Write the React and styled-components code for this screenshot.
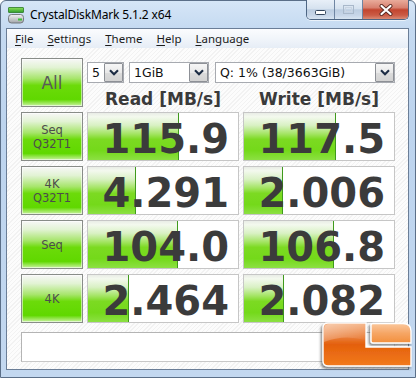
import React from "react";
import styled, { createGlobalStyle } from "styled-components";

const Global = createGlobalStyle`
  html, body { margin: 0; padding: 0; background: #ffffff; }
  body { width: 416px; height: 378px; overflow: hidden; }
`;

const Window = styled.div`
  position: relative;
  box-sizing: border-box;
  width: 416px;
  height: 378px;
  border: 1px solid #5b6f88;
  border-radius: 6px 6px 0 0;
  background: linear-gradient(to bottom, #d6e6f7 0px, #c5daf1 27px, #bdd4ee 120px, #c3d8f0 100%);
  display: flex;
  flex-direction: column;
  font-family: "DejaVu Sans", Verdana, sans-serif;
`;

const TitleBar = styled.div`
  height: 27px;
  flex: none;
  display: flex;
  align-items: center;
`;

const AppIcon = styled.svg`
  margin-left: 7px;
  flex: none;
`;

const Title = styled.span`
  margin-left: 5px;
  font-family: "Noto Sans", "Open Sans", sans-serif;
  font-size: 12px;
  letter-spacing: -0.15px;
  color: #000;
  line-height: 16px;
`;

const Controls = styled.div`
  margin-left: auto;
  margin-right: 6px;
  margin-top: -1px;
  align-self: flex-start;
  display: flex;
  height: 19px;
  border: 1px solid #4e6684;
  border-top: none;
  border-radius: 0 0 5px 5px;
  overflow: hidden;
  box-shadow: 0 1px 0 rgba(255, 255, 255, 0.6);
`;

const CtrlButton = styled.div`
  width: ${(p) => p.$w}px;
  height: 100%;
  display: flex;
  align-items: center;
  justify-content: center;
  box-sizing: border-box;
  border-left: ${(p) => (p.$first ? "none" : "1px solid #6f85a2")};
  background: ${(p) =>
    p.$close
      ? "linear-gradient(to bottom, #e9ab9b 0%, #d88170 40%, #c2452f 52%, #cb5b45 80%, #d98a74 100%)"
      : "linear-gradient(to bottom, #e8eff8 0%, #d6e2ef 45%, #bccde1 52%, #c7d6e8 80%, #d8e4f1 100%)"};
`;

const Client = styled.div`
  flex: 1;
  margin: 0 6px 7px 5px;
  border: 1px solid #6b7e97;
  display: flex;
  flex-direction: column;
  min-height: 0;
`;

const MenuBar = styled.div`
  height: 19px;
  flex: none;
  display: flex;
  align-items: center;
  gap: 14px;
  padding-left: 8px;
  background: linear-gradient(to bottom, #fbfcfe 0%, #f1f5fa 50%, #e6edf6 100%);
  font-family: "Noto Sans", "Open Sans", sans-serif;
  font-size: 11.5px;
  color: #1b1b1b;
`;

const MenuItem = styled.span`
  line-height: 16px;
  u { text-decoration: underline; text-underline-offset: 2px; }
`;

const Body = styled.div`
  flex: 1;
  padding: 10px 0 0 14px;
  background-color: #fbfbfb;
  background-image: repeating-linear-gradient(
    135deg,
    #fcfcfc 0px,
    #fcfcfc 2px,
    #f2f2f2 2px,
    #f2f2f2 3px
  );
`;

const Grid = styled.div`
  display: grid;
  grid-template-columns: 62px 152px 152px;
  grid-template-rows: repeat(5, 49px);
  column-gap: 4px;
  row-gap: 5px;
`;

const GreenButton = styled.div`
  box-sizing: border-box;
  border: 1px solid #888c88;
  box-shadow: inset 0 0 0 1px rgba(255, 255, 255, 0.55);
  background: linear-gradient(
    to bottom,
    #f7f7f7 0%,
    #e2f3d4 18%,
    #a6e56a 42%,
    #6cdb0a 56%,
    #60d800 86%,
    #9ee85c 94%,
    #c8f2a4 100%
  );
  display: flex;
  flex-direction: column;
  align-items: center;
  justify-content: center;
  color: ${(p) => (p.$big ? "#5a5a5a" : "#4c4c4c")};
  font-size: ${(p) => (p.$big ? "17px" : "11.5px")};
  line-height: ${(p) => (p.$big ? "20px" : "14px")};
`;

const TopRight = styled.div`
  grid-column: 2 / span 2;
  display: flex;
  flex-direction: column;
  padding-top: 4px;
`;

const SelectRow = styled.div`
  display: flex;
  height: 21px;
`;

const SelectBox = styled.div`
  box-sizing: border-box;
  width: ${(p) => p.$w}px;
  margin-left: ${(p) => p.$ml || 0}px;
  height: 21px;
  border: 1px solid #a7aab0;
  background: #ffffff;
  display: flex;
  align-items: stretch;
`;

const SelectText = styled.span`
  flex: 1;
  padding-left: 4px;
  font-size: 12.5px;
  line-height: 19px;
  color: #111;
  white-space: nowrap;
  overflow: hidden;
`;

const DropButton = styled.span`
  box-sizing: border-box;
  width: 19px;
  border: 1px solid #8d9096;
  border-radius: 1px;
  background: linear-gradient(to bottom, #f6f6f6 0%, #e9e9e9 50%, #dcdcdc 51%, #d2d2d2 100%);
  display: flex;
  align-items: center;
  justify-content: center;
`;

const HeaderRow = styled.div`
  display: grid;
  grid-template-columns: 152px 152px;
  column-gap: 4px;
  margin-top: 6px;
`;

const Header = styled.div`
  text-align: center;
  font-weight: bold;
  font-size: 17px;
  line-height: 20px;
  color: #3a3a3a;
`;

const Cell = styled.div`
  box-sizing: border-box;
  border: 1px solid #c6c6c6;
  background: #ffffff;
  display: grid;
  & > * { grid-area: 1 / 1; }
`;

const Bar = styled.div`
  justify-self: start;
  align-self: stretch;
  box-sizing: border-box;
  border-right: 1px solid #3f9a1c;
  background: linear-gradient(
    to bottom,
    #e9ece6 0%,
    #f3f9ee 8%,
    #d9f1c4 26%,
    #a5e566 44%,
    #7cda22 56%,
    #74d91a 80%,
    #8ce043 100%
  );
`;

const Value = styled.div`
  justify-self: end;
  align-self: center;
  padding: 5px 9px 0 0;
  font-weight: bold;
  font-size: 40px;
  line-height: 40px;
  color: #3b3b3b;
  position: relative;
`;

const Comment = styled.div`
  box-sizing: border-box;
  width: 374px;
  height: 30px;
  margin-top: 9px;
  border: 1px solid #b4b4b4;
  border-right-color: #d8d8d8;
  border-bottom-color: #c8c8c8;
  background: #ffffff;
`;

const Logo = styled.svg`
  position: absolute;
  left: 317px;
  top: 317px;
`;

const rows = [
  { label: ["Seq", "Q32T1"], read: "115.9", rw: 91, write: "117.5", ww: 92 },
  { label: ["4K", "Q32T1"], read: "4.291", rw: 48, write: "2.006", ww: 39 },
  { label: ["Seq"], read: "104.0", rw: 90, write: "106.8", ww: 90 },
  { label: ["4K"], read: "2.464", rw: 41, write: "2.082", ww: 40 },
];

const Chevron = () => (
  <svg width="10" height="7" viewBox="0 0 10 7">
    <polyline points="1,1.2 5,5.2 9,1.2" fill="none" stroke="#1c2c44" strokeWidth="2.1" />
  </svg>
);

const Select = ({ w, ml, children }) => (
  <SelectBox $w={w} $ml={ml}>
    <SelectText>{children}</SelectText>
    <DropButton>
      <Chevron />
    </DropButton>
  </SelectBox>
);

const Menu = ({ k, rest }) => (
  <MenuItem>
    <u>{k}</u>
    {rest}
  </MenuItem>
);

export default function App() {
  return (
    <>
      <Global />
      <Window>
        <TitleBar>
          <AppIcon width="17" height="18" viewBox="0 0 17 18">
            <defs>
              <linearGradient id="ig" x1="0" y1="0" x2="0" y2="1">
                <stop offset="0" stopColor="#8ee05a" />
                <stop offset="1" stopColor="#2f9c2c" />
              </linearGradient>
              <linearGradient id="dg" x1="0" y1="0" x2="0" y2="1">
                <stop offset="0" stopColor="#f2f2f2" />
                <stop offset="1" stopColor="#a2a6aa" />
              </linearGradient>
            </defs>
            <rect x="0.5" y="1.5" width="15" height="5" rx="0.5" fill="url(#ig)" stroke="#2a7a26" strokeWidth="0.8" />
            <rect x="0.5" y="8.5" width="15" height="8.5" rx="3" fill="url(#dg)" stroke="#6c7076" strokeWidth="0.9" />
            <rect x="10" y="12.5" width="4" height="2" fill="#3fc23a" />
          </AppIcon>
          <Title>CrystalDiskMark 5.1.2 x64</Title>
          <Controls>
            <CtrlButton $w={27} $first>
              <svg width="11" height="6" viewBox="0 0 11 6" style={{ marginTop: 6 }}>
                <rect x="0.5" y="0.5" width="10" height="4" rx="1" fill="#ffffff" stroke="#34465c" />
              </svg>
            </CtrlButton>
            <CtrlButton $w={28}>
              <svg width="11" height="9" viewBox="0 0 11 9">
                <rect x="0.5" y="0.5" width="10" height="8" fill="none" stroke="#a9b8ca" />
                <rect x="2.5" y="2.5" width="6" height="4" fill="none" stroke="#c9d4e2" />
              </svg>
            </CtrlButton>
            <CtrlButton $w={46} $close>
              <svg width="14" height="12" viewBox="0 0 14 12">
                <path d="M2.5 2 L11.5 10 M11.5 2 L2.5 10" stroke="#5a2a22" strokeWidth="4" strokeLinecap="round" />
                <path d="M2.5 2 L11.5 10 M11.5 2 L2.5 10" stroke="#ffffff" strokeWidth="2.2" strokeLinecap="round" />
              </svg>
            </CtrlButton>
          </Controls>
        </TitleBar>
        <Client>
          <MenuBar>
            <Menu k="F" rest="ile" />
            <Menu k="S" rest="ettings" />
            <Menu k="T" rest="heme" />
            <Menu k="H" rest="elp" />
            <Menu k="L" rest="anguage" />
          </MenuBar>
          <Body>
            <Grid>
              <GreenButton $big>All</GreenButton>
              <TopRight>
                <SelectRow>
                  <Select w={37}>5</Select>
                  <Select w={80} ml={5}>1GiB</Select>
                  <Select w={180} ml={6}>Q: 1% (38/3663GiB)</Select>
                </SelectRow>
                <HeaderRow>
                  <Header>Read [MB/s]</Header>
                  <Header>Write [MB/s]</Header>
                </HeaderRow>
              </TopRight>
              {rows.map((r) => (
                <React.Fragment key={r.label.join("-")}>
                  <GreenButton>
                    {r.label.map((l) => (
                      <span key={l}>{l}</span>
                    ))}
                  </GreenButton>
                  <Cell>
                    <Bar style={{ width: r.rw }} />
                    <Value>{r.read}</Value>
                  </Cell>
                  <Cell>
                    <Bar style={{ width: r.ww }} />
                    <Value>{r.write}</Value>
                  </Cell>
                </React.Fragment>
              ))}
            </Grid>
            <Comment />
          </Body>
        </Client>
        <Logo width="98" height="58" viewBox="0 0 98 58">
          <defs>
            <linearGradient id="lm" x1="0" y1="0" x2="0" y2="1">
              <stop offset="0" stopColor="#f2a46e" />
              <stop offset="0.35" stopColor="#e97a34" />
              <stop offset="0.5" stopColor="#e4600c" />
              <stop offset="1" stopColor="#f27a1c" />
            </linearGradient>
            <linearGradient id="ls" x1="0" y1="0" x2="0" y2="1">
              <stop offset="0" stopColor="#fac79c" />
              <stop offset="0.5" stopColor="#f6a665" />
              <stop offset="1" stopColor="#f28f3c" />
            </linearGradient>
            <linearGradient id="lg" x1="0" y1="0" x2="1" y2="1">
              <stop offset="0" stopColor="#ffffff" stopOpacity="0.45" />
              <stop offset="1" stopColor="#ffffff" stopOpacity="0" />
            </linearGradient>
            <filter id="lsh" x="-20%" y="-20%" width="140%" height="150%">
              <feDropShadow dx="-1.5" dy="2" stdDeviation="1.2" floodColor="#444" floodOpacity="0.65" />
            </filter>
          </defs>
          <g filter="url(#lsh)">
            <path
              d="M5 10 Q5 5 10 5 L48 5 L48 29 L93 29 L93 48 L10 48 Q5 48 5 43 Z"
              fill="url(#lm)"
              stroke="#ffffff"
              strokeWidth="1.4"
            />
            <path d="M6 11 Q6 6 11 6 L47 6 L47 22 Q26 16 6 24 Z" fill="url(#lg)" />
            <path
              d="M53 7 Q53 5.5 55 5.5 L85 5.5 Q93 5.5 93 13 L93 25 L55 25 Q53 25 53 23 Z"
              fill="url(#ls)"
              stroke="#ffffff"
              strokeWidth="1.4"
            />
          </g>
        </Logo>
      </Window>
    </>
  );
}
